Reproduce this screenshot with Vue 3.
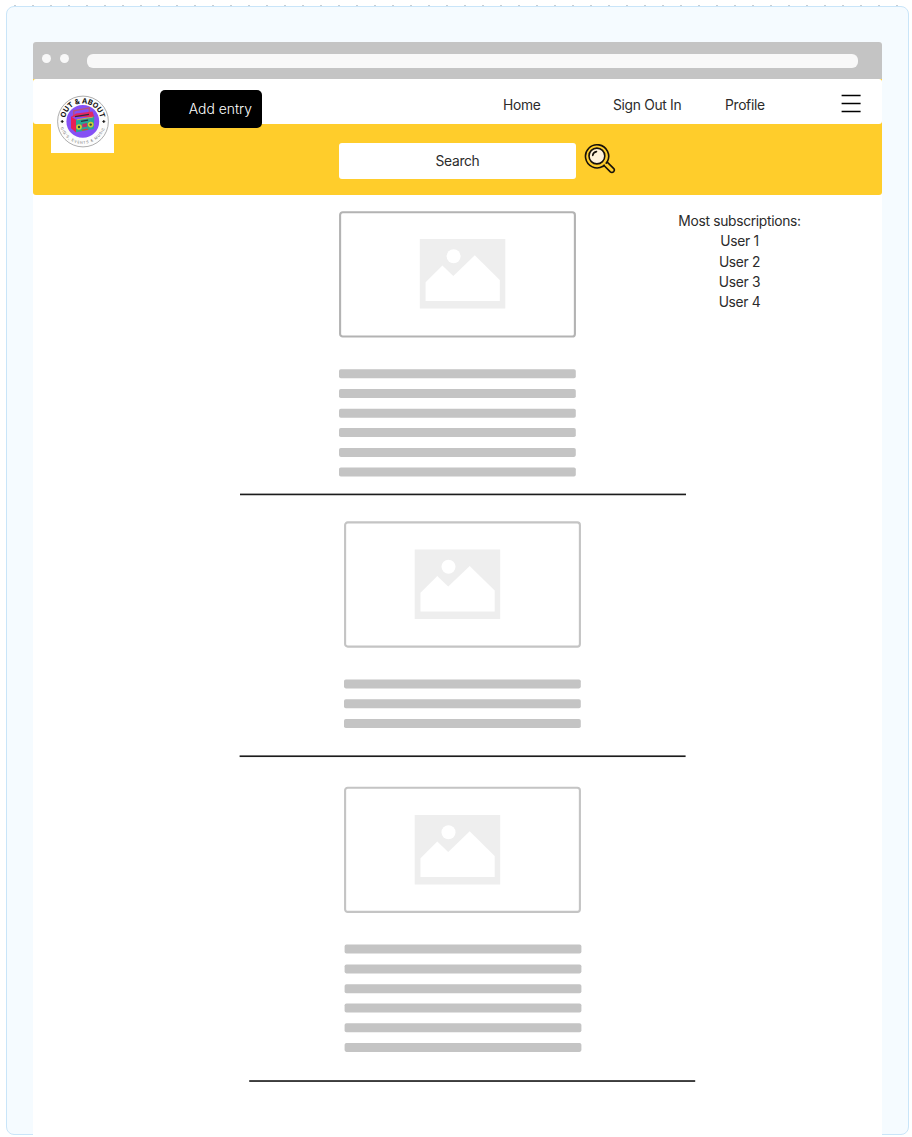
<script setup>
const barTops = [0.2, 20, 39.8, 59.1, 78.9, 98.5]
const posts = [
  { id: 'first', bars: 6, iconX: 80.8, iconY: 28, frameY: 0.3, barY: 0, barX: 0, ruleY: 0.6, ruleX: 0 },
  { id: 'second', bars: 3, iconX: 70.7, iconY: 28.6, frameY: 0.4, barY: 0.2, barX: 0, ruleY: 0.4, ruleX: 0.6 },
  { id: 'third', bars: 6, iconX: 70.7, iconY: 29, frameY: 0.7, barY: 0.4, barX: 0.6, ruleY: 0.2, ruleX: 0.2 },
]
const users = ['User 1', 'User 2', 'User 3', 'User 4']
</script>

<template>
  <div class="canvas">
    <div class="dots"></div>
    <div class="frame">
      <main class="page">
        <div class="chrome">
          <i class="dot"></i>
          <i class="dot"></i>
          <div class="address"></div>
        </div>
        <header class="header">
          <div class="topbar">
            <div class="logo">
              <svg width="64" height="64" viewBox="0 0 64 64">
                <defs>
                  <path id="arcTop" d="M14.1 34 A17.8 17.8 0 1 1 49.5 34" />
                  <path id="arcBottom" d="M8.5 31.5 A23.3 23.3 0 1 0 55.1 31.5" />
                </defs>
                <circle cx="32" cy="32.5" r="25.4" fill="#fcfcfc" stroke="#777" stroke-width=".6" />
                <circle cx="31.8" cy="32.4" r="16.4" fill="#8550f5" />
                <text class="brand"><textPath href="#arcTop" startOffset="50%" text-anchor="middle">OUT &amp; ABOUT</textPath></text>
                <text class="tagline"><textPath href="#arcBottom" startOffset="50%" text-anchor="middle">GIG'S, EVENTS &amp; MUSIC</textPath></text>
                <path d="M11.2 31l.5 1 1 .5-1 .5-.5 1-.5-1-1-.5 1-.5zM52.8 31l.5 1 1 .5-1 .5-.5 1-.5-1-1-.5 1-.5z" fill="#111" stroke="#111" stroke-width=".4" />
                <path d="M22.8 27V21.8L38.3 18.8V24" fill="none" stroke="#b8527c" stroke-width="1.4" />
                <path d="M20 28L25 24.5 41.5 22.5 43.3 28z" fill="#e22864" />
                <path d="M20 27.5l5 3.2v12.8l-5-4.2z" fill="#e91d55" />
                <path d="M25 30.7L43.3 27.5l-.5 12.6L25 43.3z" fill="#28a795" />
                <path d="M24 27.6l14-2.2M30 32.3l7-1.2" stroke="#28323f" stroke-width="1.3" />
                <path d="M26 30.8l15.8-2.6" stroke="#df9d54" stroke-width="1" />
                <path d="M31.3 35l4.8-.9v3.7l-4.8.8z" fill="#c32e65" />
                <path d="M31 41.1l6-1" stroke="#cf473b" stroke-width="1.3" />
                <circle cx="28" cy="38" r="2.8" fill="#d2cd32" />
                <circle cx="28" cy="38" r="1.2" fill="#28464a" />
                <circle cx="39.7" cy="35.6" r="2.8" fill="#d2cd32" />
                <circle cx="39.7" cy="35.6" r="1.2" fill="#28464a" />
              </svg>
            </div>
            <button class="add">Add entry</button>
            <nav class="nav">
              <a class="home">Home</a>
              <a class="sign">Sign Out In</a>
              <a class="profile">Profile</a>
            </nav>
            <svg class="menu" width="20" height="19" viewBox="0 0 20 19">
              <path d="M.6 1.5h19M.6 9.5h19M.6 17.5h19" stroke="#000" stroke-width="1.3" />
            </svg>
          </div>
          <div class="searchrow">
            <div class="search">Search</div>
            <svg class="glass" width="32" height="32" viewBox="0 0 32 32" fill="none" stroke="#17110a" stroke-width="1.6">
              <path d="M19 23.3A11.6 11.6 0 1 1 23.2 19L29.8 25.6Q31 27 29.7 28.6Q28.1 30.2 26.3 28.9L20 22.5" />
              <circle cx="12.9" cy="13" r="7.9" fill="#fff2da" />
              <path d="M8.7 12.4A4.4 4.4 0 0 1 12.5 8.6M19 23.3L20.2 22.2M22.2 20.1L23.2 19" stroke-linecap="round" />
            </svg>
          </div>
        </header>
        <div class="content">
          <div class="feed">
            <article v-for="post in posts" :key="post.id" class="post" :class="post.id">
              <svg class="picture" width="238" height="128">
                <rect x="1.1" :y="post.frameY + 1" width="234.8" height="124.2" rx="2.6" fill="#fff" stroke-width="2.1" />
                <g :transform="`translate(${post.iconX} ${post.iconY})`">
                  <path d="M0 0h85.5v69.5H0z" fill="#eee" />
                  <circle cx="33.8" cy="17.2" r="7" fill="#fff" />
                  <path d="M5.8 43.2L22.6 26.5 33.5 37 55 16.3 80 41V62H5.8z" fill="#fff" />
                </g>
              </svg>
              <svg class="bars" width="238" :height="post.bars === 3 ? 50 : 109">
                <rect v-for="n in post.bars" :key="n" :x="post.barX" :y="barTops[n - 1] + post.barY" width="236.8" height="9" rx="1.8" fill="#c4c4c4" />
              </svg>
              <svg class="rule" width="448" height="3">
                <rect :x="post.ruleX" :y="post.ruleY" width="446" height="1.65" fill="#1c1c1c" />
              </svg>
            </article>
          </div>
          <aside class="side">
            <div>Most subscriptions:</div>
            <div v-for="user in users" :key="user">{{ user }}</div>
          </aside>
        </div>
      </main>
    </div>
  </div>
</template>

<style>
body {
  margin: 0;
  background: #fff;
}
</style>

<style scoped>
.canvas {
  box-sizing: border-box;
  position: relative;
  width: 912px;
  height: 1137px;
  padding: 6px 3px 0 6px;
  overflow: hidden;
  background: #fff;
  color: #2b2b2b;
  font: 13.8px/20.3px Inter, sans-serif;
  letter-spacing: -0.31px;
}
.dots {
  position: absolute;
  left: 14px;
  top: 5px;
  width: 888px;
  height: 1px;
  background: repeating-linear-gradient(90deg, #c8ced4 0 2px, transparent 2px 18px);
}
.frame {
  box-sizing: border-box;
  height: 1129px;
  padding: 35px 26px 0;
  border: 1px solid #c9e5f9;
  border-radius: 8px;
  background: #f5fbff;
}
.page {
  width: 849px;
  height: 1095px;
  background: #fff;
  border-radius: 3px 3px 0 0;
}
.chrome {
  display: flex;
  box-sizing: border-box;
  height: 37px;
  padding: 12px 24px 0 9px;
  background: #c4c4c4;
  border-radius: 3px 3px 0 0;
}
.dot {
  width: 9px;
  height: 9px;
  margin-right: 9px;
  border-radius: 50%;
  background: #f8f8f8;
}
.address {
  flex: 1;
  height: 14px;
  margin-left: 9px;
  border-radius: 6px;
  background: #f8f8f8;
}
.header {
  height: 116px;
  border-radius: 0 0 3px 3px;
  background: #ffcd2b;
}
.topbar {
  display: flex;
  align-items: flex-start;
  height: 45px;
  border-radius: 3px;
  background: #fff;
}
.logo {
  width: 63px;
  height: 64px;
  margin: 10px 0 0 18px;
  background: #fff;
}
.logo svg,
.post svg {
  display: block;
}
.brand {
  font: 700 7.2px Inter, sans-serif;
  letter-spacing: 0;
  fill: #111;
}
.tagline {
  font: 3.6px Inter, sans-serif;
  letter-spacing: 0.75px;
  fill: #666;
}
.add {
  width: 102px;
  height: 38px;
  margin: 11px 0 0 46px;
  padding: 0 10px 0 0;
  border: 0;
  border-radius: 5px;
  background: #000;
  color: #fff;
  text-align: right;
  white-space: nowrap;
  letter-spacing: 0;
  font: 300 13.9px/38px Inter, sans-serif;
}
.nav {
  display: flex;
  width: 579px;
  padding: 15.5px 0 0 241px;
  box-sizing: border-box;
  white-space: nowrap;
}
.home {
  width: 110px;
}
.sign {
  width: 112px;
}
.menu {
  margin-top: 15px;
}
.searchrow {
  display: flex;
  padding: 19px 0 0 306px;
}
.search {
  width: 237px;
  height: 36px;
  border-radius: 3px;
  background: #fff;
  line-height: 37px;
  text-align: center;
}
.glass {
  margin-left: 8px;
}
.content {
  display: flex;
}
.feed {
  width: 663px;
}
.post {
  box-sizing: border-box;
  padding-left: 311px;
}
.first {
  height: 326px;
  padding-top: 16px;
  padding-left: 306px;
}
.second {
  height: 265px;
}
.picture {
  stroke: #c4c4c4;
}
.first .picture {
  stroke: #b3b3b3;
}
.picture g {
  stroke: none;
}
.bars {
  margin-top: 30px;
}
.rule {
  margin: 15px 0 0 -99px;
}
.second .rule {
  margin: 26px 0 0 -105px;
}
.third .rule {
  margin: 27px 0 0 -95px;
}
.side {
  width: 87px;
  display: flex;
  flex-direction: column;
  align-items: center;
  padding-top: 16px;
  white-space: nowrap;
}
</style>
